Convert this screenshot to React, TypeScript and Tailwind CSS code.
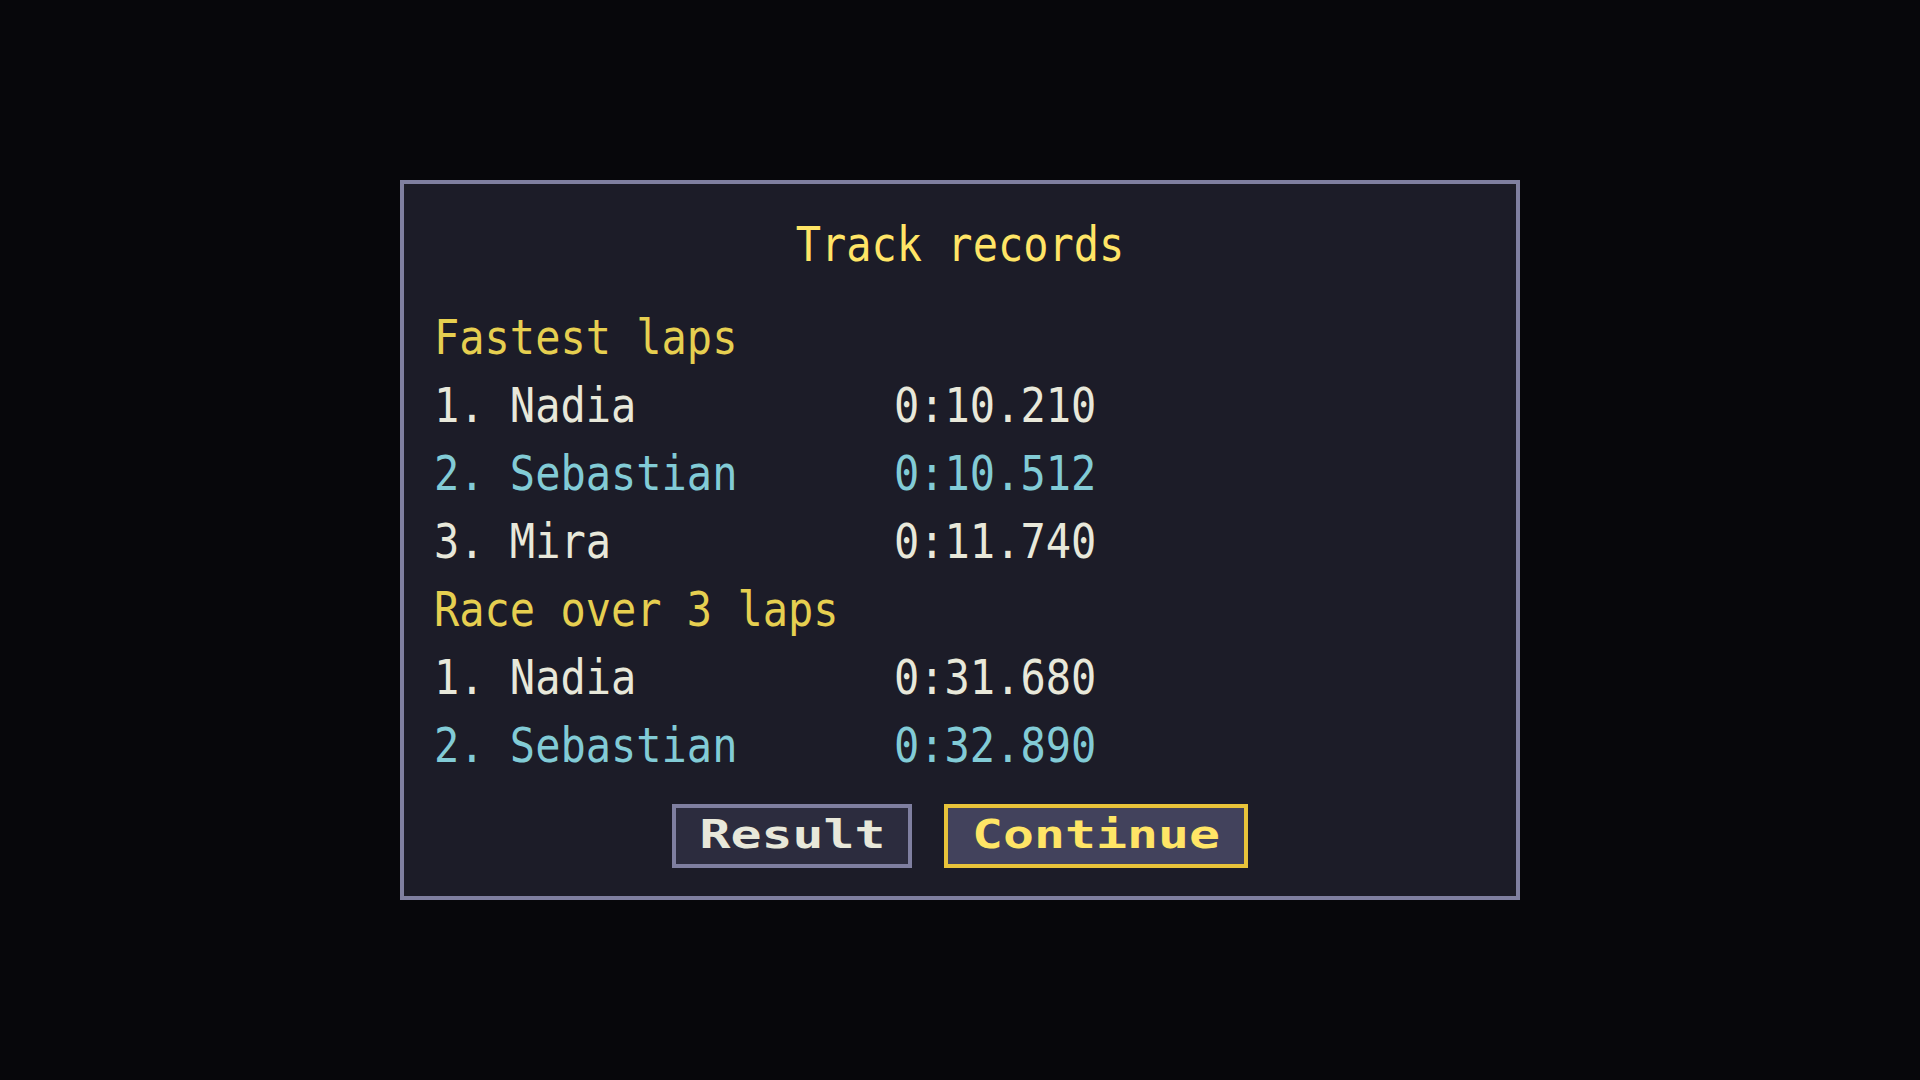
const mono = { fontFamily: '"DejaVu Sans Mono", "Liberation Mono", monospace' };

type Row = { name: string; time: string; highlight?: boolean };

const sections: { title: string; rows: Row[] }[] = [
  {
    title: "Fastest laps",
    rows: [
      { name: "1. Nadia", time: "0:10.210" },
      { name: "2. Sebastian", time: "0:10.512", highlight: true },
      { name: "3. Mira", time: "0:11.740" },
    ],
  },
  {
    title: "Race over 3 laps",
    rows: [
      { name: "1. Nadia", time: "0:31.680" },
      { name: "2. Sebastian", time: "0:32.890", highlight: true },
    ],
  },
];

function Tall({ children }: { children: React.ReactNode }) {
  return (
    <span className="inline-block origin-center scale-y-[1.13] whitespace-pre text-[42px] leading-none">
      {children}
    </span>
  );
}

function Wide({ children }: { children: React.ReactNode }) {
  return (
    <span className="inline-block origin-center -translate-y-[2px] scale-x-[1.32] whitespace-pre text-[39px] font-bold leading-none">
      {children}
    </span>
  );
}

export default function App() {
  return (
    <div className="flex h-[1080px] w-[1920px] items-center justify-center bg-[#07070b]" style={mono}>
      <div className="h-[720px] w-[1120px] border-4 border-[#7f7fa0] bg-[#1c1c28] pt-[27px]">
        <div className="flex flex-col">
          <div className="flex h-[68px] items-center justify-center text-[#ffe566]">
            <Tall>Track records</Tall>
          </div>
          <div className="h-[25px]" />
          {sections.map((s) => (
            <div key={s.title} className="pl-[30px]">
              <div className="flex h-[68px] items-center text-[#e6cf50]">
                <Tall>{s.title}</Tall>
              </div>
              {s.rows.map((r) => (
                <div
                  key={r.name + r.time}
                  className={`flex h-[68px] items-center ${r.highlight ? "text-[#82cbd6]" : "text-[#e8e8da]"}`}
                >
                  <div className="w-[460px]">
                    <Tall>{r.name}</Tall>
                  </div>
                  <div>
                    <Tall>{r.time}</Tall>
                  </div>
                </div>
              ))}
            </div>
          ))}
          <div className="mt-[24px] flex justify-center gap-[32px]">
            <button className="flex h-[64px] w-[240px] items-center justify-center border-4 border-[#7f7fa0] bg-[#2c2c3e] text-[#e8e8da]">
              <Wide>Result</Wide>
            </button>
            <button className="flex h-[64px] w-[304px] items-center justify-center border-4 border-[#e8c33a] bg-[#42425c] text-[#ffe566]">
              <Wide>Continue</Wide>
            </button>
          </div>
        </div>
      </div>
    </div>
  );
}
